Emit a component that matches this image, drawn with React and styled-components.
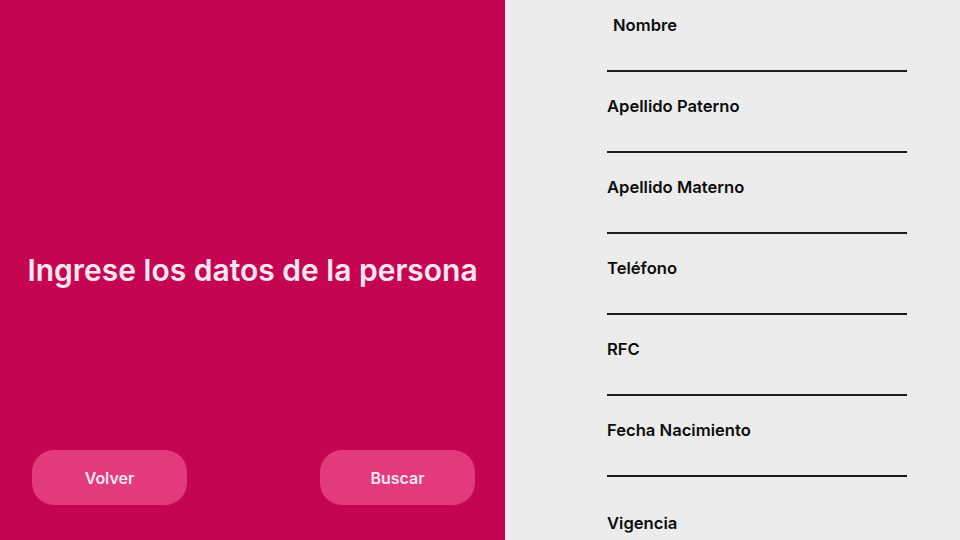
import React from "react";
import styled, { createGlobalStyle } from "styled-components";

const GlobalStyle = createGlobalStyle`
  html, body {
    margin: 0;
    padding: 0;
    background: #ececec;
  }
  body {
    font-family: Inter, "Noto Sans", sans-serif;
  }
`;

const Page = styled.div`
  display: grid;
  grid-template-columns: 505px 1fr;
  grid-template-rows: 540px;
  width: 960px;
  height: 540px;
  overflow: hidden;
`;

// left pink panel
const LeftPanel = styled.div`
  background-color: #c50551;
  display: grid;
  grid-template-rows: 1fr auto 1fr;
`;

const Title = styled.h1`
  grid-row: 2;
  margin: 0;
  text-align: center;
  color: #fce6f0;
  font-size: 30px;
  font-weight: 600;
  line-height: 36px;
`;

const ButtonRow = styled.div`
  grid-row: 3;
  align-self: end;
  display: flex;
  justify-content: space-between;
  padding: 0 30px 35px 32px;
`;

const PillButton = styled.button`
  width: 155px;
  height: 55px;
  border: none;
  border-radius: 22px;
  background-color: #e23a7d;
  color: #fce6f0;
  font-family: Inter, "Noto Sans", sans-serif;
  font-size: 16px;
  font-weight: 600;
  cursor: pointer;
`;

// right form panel
const FormPanel = styled.div`
  background-color: #ececec;
  padding: 15px 0 0 102px;
  display: flex;
  flex-direction: column;
  overflow: hidden;
`;

const Field = styled.div`
  width: 300px;
  flex-shrink: 0;
  margin-bottom: 24px;
  margin-top: ${(p) => (p.last ? "12px" : "0")};
`;

const Label = styled.div`
  color: #0d0d0d;
  font-size: 16.6px;
  font-weight: 600;
  line-height: 20px;
  padding-left: ${(p) => (p.indent ? "6px" : "0")};
`;

const Line = styled.div`
  margin-top: 35px;
  height: 2px;
  background-color: #1c1c1c;
`;

const fields = [
  "Nombre",
  "Apellido Paterno",
  "Apellido Materno",
  "Teléfono",
  "RFC",
  "Fecha Nacimiento",
];

export default function App() {
  return (
    <>
      <GlobalStyle />
      <Page>
        <LeftPanel>
          <Title>Ingrese los datos de la persona</Title>
          <ButtonRow>
            <PillButton>Volver</PillButton>
            <PillButton>Buscar</PillButton>
          </ButtonRow>
        </LeftPanel>
        <FormPanel>
          {fields.map((f, i) => (
            <Field key={f}>
              <Label indent={i === 0}>{f}</Label>
              <Line />
            </Field>
          ))}
          <Field last>
            <Label>Vigencia</Label>
          </Field>
        </FormPanel>
      </Page>
    </>
  );
}
